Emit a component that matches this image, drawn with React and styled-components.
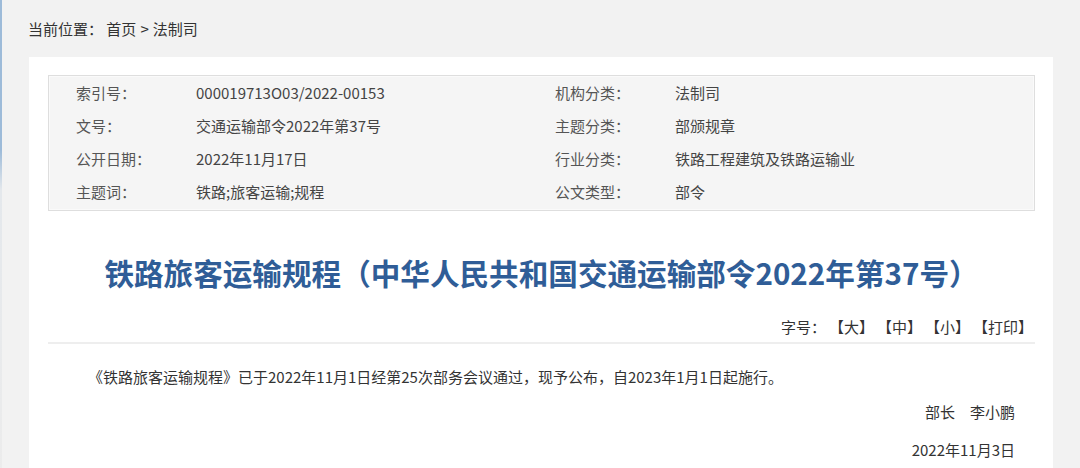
import styled, { createGlobalStyle } from "styled-components";

const GlobalStyle = createGlobalStyle`
  html, body {
    margin: 0;
    padding: 0;
    background: #f2f2f2;
  }
  body {
    font-family: "Noto Sans CJK SC", "Noto Sans", sans-serif;
    color: #333;
  }
`;

const Page = styled.div`
  min-height: 468px;
  background:
    linear-gradient(to bottom, #9dbbd9 0, #9dbbd9 150px, #e4e8ec 190px, #ececec 100%) left top / 2px 100% no-repeat,
    #f2f2f2;
  overflow: hidden;
`;

const Crumbs = styled.div`
  height: 57px;
  display: flex;
  align-items: center;
  padding-left: 28px;
  font-size: 15px;
  color: #333;

  span {
    margin: 0 4px;
  }
`;

const Card = styled.div`
  margin-left: 29px;
  width: 1024px;
  min-height: 420px;
  box-sizing: border-box;
  background: #fff;
  padding: 18px 18px 0 19px;
`;

const InfoBox = styled.div`
  display: grid;
  grid-template-columns: 120px 359px 120px 1fr;
  grid-auto-rows: 33px;
  align-items: center;
  padding: 0 0 2px 27px;
  background: #f5f5f5;
  border: 1px solid #dedede;
  box-shadow: inset 0 0 0 1px #fafafa;
  font-size: 15px;
`;

const Label = styled.div`
  color: #555;
`;

const Value = styled.div`
  color: #444;
`;

const Title = styled.h1`
  margin: 42px 0 0;
  font-size: 29.6px;
  line-height: 40px;
  font-weight: 700;
  text-align: center;
  color: #2f5d97;
`;

const Tools = styled.div`
  margin-top: 22px;
  display: flex;
  justify-content: flex-end;
  gap: 3px;
  padding: 0 2px 3px 0;
  line-height: 24px;
  font-size: 15px;
  color: #333;
  border-bottom: 2px solid #eeeeee;
`;

const ToolLink = styled.a`
  color: #333;
  text-decoration: none;
  cursor: pointer;
`;

const Body = styled.div`
  padding: 21px 20px 0 40px;
  font-size: 15px;
  color: #333;
`;

const Para = styled.p`
  margin: 0;
  line-height: 24px;
`;

const Sign = styled.p`
  margin: ${(p) => p.$gap}px 0 0;
  line-height: 24px;
  text-align: right;
`;

const info = [
  ["索引号：", "000019713O03/2022-00153", "机构分类：", "法制司"],
  ["文号：", "交通运输部令2022年第37号", "主题分类：", "部颁规章"],
  ["公开日期：", "2022年11月17日", "行业分类：", "铁路工程建筑及铁路运输业"],
  ["主题词：", "铁路;旅客运输;规程", "公文类型：", "部令"],
];

const tools = ["【大】", "【中】", "【小】", "【打印】"];

const App = () => {
  return (
    <Page>
      <GlobalStyle />
      <Crumbs>
        当前位置：&nbsp;首页<span>&gt;</span>法制司
      </Crumbs>
      <Card>
        <InfoBox>
          {info.flatMap((row) => [
            <Label key={row[0]}>{row[0]}</Label>,
            <Value key={row[0] + "v"}>{row[1]}</Value>,
            <Label key={row[2]}>{row[2]}</Label>,
            <Value key={row[2] + "v"}>{row[3]}</Value>,
          ])}
        </InfoBox>
        <Title>铁路旅客运输规程（中华人民共和国交通运输部令2022年第37号）</Title>
        <Tools>
          <span>字号：</span>
          {tools.map((t) => (
            <ToolLink key={t}>{t}</ToolLink>
          ))}
        </Tools>
        <Body>
          <Para>
            《铁路旅客运输规程》已于2022年11月1日经第25次部务会议通过，现予公布，自2023年1月1日起施行。
          </Para>
          <Sign $gap={11}>部长&emsp;李小鹏</Sign>
          <Sign $gap={14}>2022年11月3日</Sign>
        </Body>
      </Card>
    </Page>
  );
};

export default App;
